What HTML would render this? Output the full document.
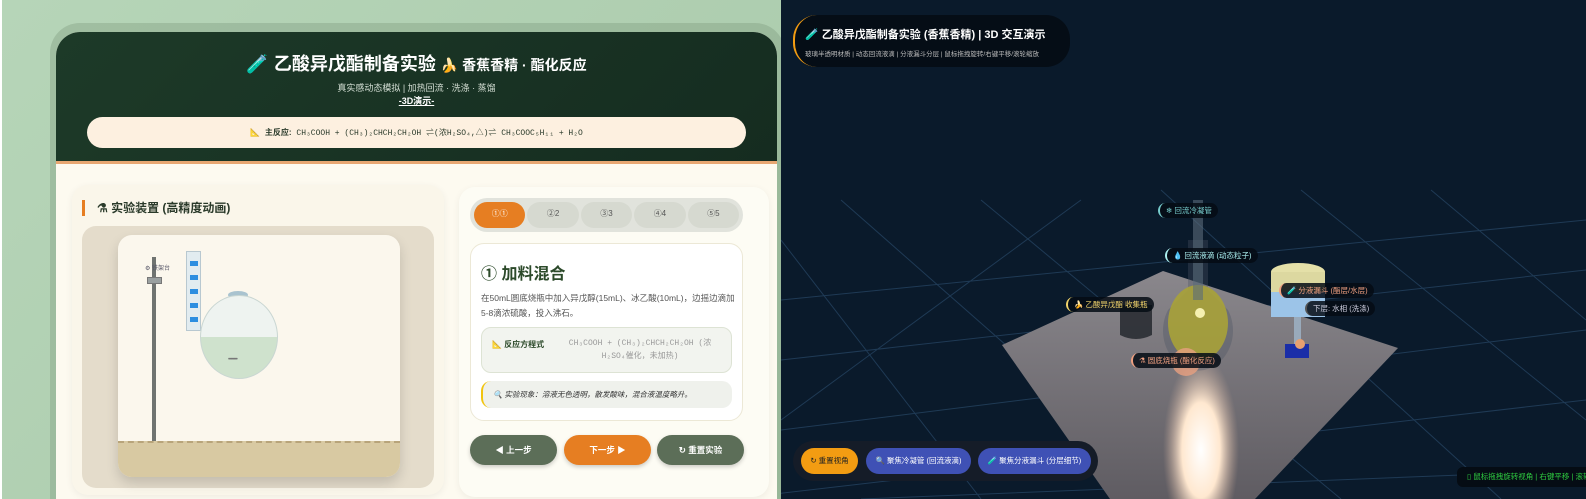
<!DOCTYPE html>
<html><head><meta charset="utf-8"><style>
*{box-sizing:border-box;margin:0;padding:0}
html,body{width:1586px;height:499px;overflow:hidden}
body{position:relative;font-family:"Liberation Sans","Noto Sans CJK SC",sans-serif;background:#0b1a2b}
.left{position:absolute;left:0;top:0;width:781px;height:499px;background:linear-gradient(135deg,#b6d5b8,#a9c9aa);border-left:2px solid #fff;overflow:hidden}
.shadow{position:absolute;left:48px;top:23px;width:735px;height:476px;border-radius:30px 30px 0 0;background:rgba(120,150,120,.35)}
.card{position:absolute;left:54px;top:32px;width:721px;height:467px;border-radius:24px 24px 0 0;overflow:hidden;background:#fdfaf0}
.hdr{height:132px;background:linear-gradient(135deg,#1d3a28,#152c20);border-bottom:3px solid #e8a772;text-align:center;color:#fff;position:relative}
.h1{position:absolute;top:18px;left:0;right:0;font-size:18px;font-weight:bold}
.h1 small{font-size:14px}
.sub{position:absolute;top:49px;left:0;right:0;font-size:9px;color:#d5dfd5}
.d3{position:absolute;top:62px;left:0;right:0;font-size:9px;font-weight:bold;text-decoration:underline}
.rx{position:absolute;left:31px;right:31px;top:85px;height:31px;border-radius:16px;background:#fdf0e0;color:#2a3a2a;font-size:8px;line-height:31px;font-family:"Liberation Mono","Noto Sans CJK SC",monospace}
.rx b{font-family:"Liberation Sans","Noto Sans CJK SC",sans-serif}
.lp{position:absolute;left:16px;top:153px;width:372px;height:310px;border-radius:16px;background:#faf6ea;box-shadow:0 2px 8px rgba(0,0,0,.06)}
.lp h3{position:absolute;left:10px;top:15px;border-left:3px solid #e67e22;padding-left:12px;font-size:12px;color:#2a3a2a;height:16px;line-height:16px}
.app{position:absolute;left:10px;top:41px;width:352px;height:262px;border-radius:14px;background:#e4dccb}
.inner{position:absolute;left:36px;top:9px;width:282px;height:242px;border-radius:14px;background:#fbf7ed;overflow:hidden;box-shadow:0 6px 12px rgba(0,0,0,.15)}
.gnd{position:absolute;left:0;right:0;bottom:0;height:36px;background:#d8c9a2;border-top:2px dashed #b8a47a}
.rp{position:absolute;left:403px;top:155px;width:310px;height:310px;border-radius:16px;background:#fdfcf4;box-shadow:0 2px 8px rgba(0,0,0,.06)}
.tabs{position:absolute;left:11px;top:11px;width:273px;height:34px;border-radius:17px;background:#e1e3dc;display:flex;gap:2px;padding:4px 4px}
.tabs div{flex:1;border-radius:13px;background:#d6d9d0;font-size:8px;color:#555;text-align:center;line-height:24px}
.tabs .on{background:#e67e22;color:#fff}
.sc{position:absolute;left:11px;top:56px;width:273px;height:178px;border-radius:14px;background:#fff;border:1px solid #ece8d6}
.sc h2{position:absolute;left:10px;top:16px;font-size:16px;color:#2c4a2a}
.sc p{position:absolute;left:10px;top:47px;width:255px;font-size:8.5px;line-height:15px;color:#555}
.eq{position:absolute;left:10px;top:83px;width:251px;height:46px;border-radius:10px;background:#f2f4ef;border:1px solid #dde3d4;font-size:8px;color:#999;padding:9px 8px 0 75px;line-height:13px;font-family:"Liberation Mono","Noto Sans CJK SC",monospace;text-align:center}
.eq b{position:absolute;left:10px;top:10px;color:#2c4a2a;font-family:"Liberation Sans","Noto Sans CJK SC",sans-serif}
.ob{position:absolute;left:10px;top:137px;width:251px;height:27px;border-radius:10px;background:#eff1ec;border-left:2px solid #f1c40f;font-size:7.5px;font-style:italic;color:#333;line-height:27px;padding-left:10px}
.btn{position:absolute;top:248px;width:87px;height:30px;border-radius:15px;background:#5c6e58;color:#fff;font-size:8.5px;font-weight:bold;text-align:center;line-height:30px;box-shadow:0 2px 4px rgba(0,0,0,.2)}
.scene{position:absolute;left:781px;top:0;width:805px;height:499px;background:#0a1a2b;overflow:hidden}
.tt{position:absolute;left:793px;top:15px;width:277px;height:52px;border-radius:24px;background:#050d16;border-left:2px solid #f39c12;color:#fff;white-space:nowrap}
.tt .a{position:absolute;left:10px;top:11px;font-size:11px;font-weight:bold}
.tt .b{position:absolute;left:10px;top:33px;font-size:6.5px;color:#bbb}
.lbl{position:absolute;height:15px;border-radius:8px;background:rgba(5,12,20,.85);font-size:7.5px;line-height:15px;padding:0 6px;border-left:2px solid;white-space:nowrap}
.bb{position:absolute;top:448px;height:26px;border-radius:13px;font-size:7.5px;line-height:26px;color:#fff;text-align:center;white-space:nowrap}
</style></head><body>
<div class="left"><div class="shadow"></div>
<div class="card">
<div class="hdr">
<div class="h1"><span style="color:#9c6">🧪</span> 乙酸异戊酯制备实验 <small>🍌 香蕉香精 · 酯化反应</small></div>
<div class="sub">真实感动态模拟 | 加热回流 · 洗涤 · 蒸馏</div>
<div class="d3">-3D演示-</div>
<div class="rx">📐 <b>主反应:</b> CH₃COOH + (CH₃)₂CHCH₂CH₂OH ⇌(浓H₂SO₄,△)⇌ CH₃COOC₅H₁₁ + H₂O</div>
</div>
<div class="lp"><h3>⚗ 实验装置 (高精度动画)</h3>
<div class="app"><div class="inner">
<div style="position:absolute;left:34px;top:22px;width:4px;height:188px;background:#6f7370"></div>
<div style="position:absolute;left:29px;top:42px;width:15px;height:7px;background:#9aa0a0;border:1px solid #777"></div>
<div style="position:absolute;left:27px;top:28px;font-size:6px;color:#556">⚙ 铁架台</div>
<div style="position:absolute;left:68px;top:16px;width:15px;height:80px;background:#e2ecf0;border:1px solid #b8c8d0"></div>
<div style="position:absolute;left:72px;top:26px;width:8px;height:5px;background:#2d8ee0;box-shadow:0 14px 0 #2d8ee0,0 28px 0 #2d8ee0,0 42px 0 #2d8ee0,0 56px 0 #2d8ee0"></div>
<div style="position:absolute;left:110px;top:56px;width:20px;height:8px;border-radius:50%;background:#a9c3cf"></div>
<div style="position:absolute;left:82px;top:60px;width:78px;height:84px;border-radius:50%;border:1px solid #c9d6d2;background:linear-gradient(#eef3f0 50%,#cfe2cd 50%);overflow:hidden"></div>
<div style="position:absolute;left:110px;top:122px;font-size:6px;color:#777;letter-spacing:-1px">••••••••</div>
<div class="gnd"></div></div></div></div>
<div class="rp">
<div class="tabs"><div class="on">①①</div><div>②2</div><div>③3</div><div>④4</div><div>⑤5</div></div>
<div class="sc"><h2>① 加料混合</h2>
<p>在50mL圆底烧瓶中加入异戊醇(15mL)、冰乙酸(10mL)，边摇边滴加5-8滴浓硫酸，投入沸石。</p>
<div class="eq"><b>📐 反应方程式</b>CH₃COOH + (CH₃)₂CHCH₂CH₂OH (浓H₂SO₄催化，未加热)</div>
<div class="ob">🔍 实验现象：溶液无色透明，散发酸味，混合液温度略升。</div></div>
<div class="btn" style="left:11px">◀ 上一步</div>
<div class="btn" style="left:105px;background:#e67e22">下一步 ▶</div>
<div class="btn" style="left:198px">↻ 重置实验</div>
</div>
</div></div>
<div class="scene">
<svg width="805" height="499" style="position:absolute;left:0;top:0">
<g stroke="#1f3a55" stroke-width="1" fill="none">
<path d="M0 300 L805 220 M0 360 L805 270 M0 430 L805 330 M-50 499 L805 400 M80 499 L805 470 M60 200 L400 499 M200 200 L560 499 M380 190 L720 499 M520 190 L805 420 M650 190 L805 320 M0 240 L200 499 M300 200 L0 420"/>
</g>
<defs>
<linearGradient id="pl" x1="0" y1="0" x2="0" y2="1"><stop offset="0" stop-color="#8a878c"/><stop offset="1" stop-color="#5f5c62"/></linearGradient>
<radialGradient id="g" cx="0.5" cy="0.5" r="0.5"><stop offset="0" stop-color="#fff"/><stop offset=".5" stop-color="#ffe8d0"/><stop offset="1" stop-color="#c9a896" stop-opacity="0"/></radialGradient></defs>
<polygon points="221,345 382,271 617,348 474,499 329,499" fill="url(#pl)"/>
<ellipse cx="420" cy="450" rx="38" ry="95" fill="url(#g)"/>
<path d="M407 240 h20 v50 l20 20 a35 40 0 1 1 -60 0 l20 -20z" fill="#4a5460" opacity=".35"/>
<ellipse cx="417" cy="323" rx="30" ry="38" fill="#a8a238" opacity=".9"/>
<circle cx="419" cy="313" r="5" fill="#f5f0b0"/>
<rect x="412" y="200" width="10" height="100" fill="#5a6a7a" opacity=".6"/>
<path d="M339 305 h32 v30 q-16 8 -32 0z" fill="#2a2d33" opacity=".9"/>
<ellipse cx="517" cy="272" rx="27" ry="9" fill="#e4e0a8"/>
<rect x="490" y="272" width="54" height="45" fill="#9cc4e8"/>
<rect x="490" y="272" width="54" height="20" fill="#dcd8a0"/>
<rect x="513" y="317" width="7" height="30" fill="#9ab"/>
<rect x="504" y="344" width="24" height="14" fill="#1a2ea8"/>
<circle cx="519" cy="344" r="5" fill="#e8a070"/>
<circle cx="405" cy="362" r="14" fill="#e8a080" opacity=".8"/>
</svg>
</div>
<div class="tt"><div class="a"><span style="color:#9c6">🧪</span> 乙酸异戊酯制备实验 (香蕉香精) | 3D 交互演示</div><div class="b">玻璃半透明材质 | 动态回流液滴 | 分液漏斗分层 | 鼠标拖拽旋转/右键平移/滚轮缩放</div></div>
<div class="lbl" style="left:1158px;top:203px;color:#7cc;border-color:#7cc">❄ 回流冷凝管</div>
<div class="lbl" style="left:1165px;top:248px;color:#aee;border-color:#aee">💧 回流液滴 (动态粒子)</div>
<div class="lbl" style="left:1066px;top:297px;color:#f1d36a;border-color:#f1d36a">🍌 乙酸异戊酯 收集瓶</div>
<div class="lbl" style="left:1279px;top:283px;color:#f0a080;border-color:#f0a080">🧪 分液漏斗 (酯层/水层)</div>
<div class="lbl" style="left:1305px;top:301px;color:#ccd;border-color:#555">下层: 水相 (洗涤)</div>
<div class="lbl" style="left:1131px;top:353px;color:#f0a080;border-color:#f0a080">⚗ 圆底烧瓶 (酯化反应)</div>
<div style="position:absolute;left:793px;top:441px;width:305px;height:40px;border-radius:20px;background:#151c28"></div>
<div class="bb" style="left:801px;width:57px;background:#f39c12;color:#222">↻ 重置视角</div>
<div class="bb" style="left:866px;width:105px;background:#3f51b5">🔍 聚焦冷凝管 (回流液滴)</div>
<div class="bb" style="left:978px;width:113px;background:#3f51b5">🧪 聚焦分液漏斗 (分层细节)</div>
<div style="position:absolute;left:1457px;top:467px;width:140px;height:20px;border-radius:6px;background:#050c14;color:#2ecc40;font-size:7.5px;line-height:20px;padding-left:10px;white-space:nowrap;overflow:hidden">▯ 鼠标拖拽旋转视角 | 右键平移 | 滚轮缩放</div>
</body></html>
